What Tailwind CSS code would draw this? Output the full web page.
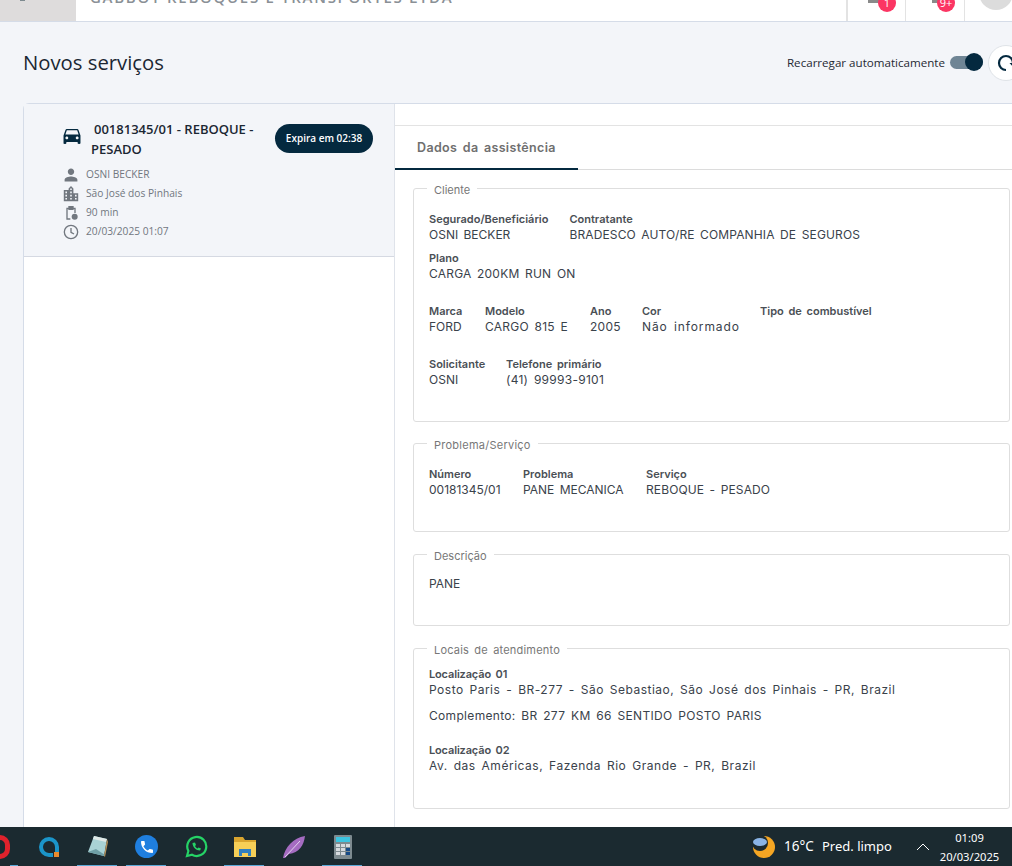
<!DOCTYPE html>
<html lang="pt-BR">
<head>
  <meta charset="UTF-8" />
  <title>Novos serviços</title>
  <script src="https://cdn.jsdelivr.net/npm/@tailwindcss/browser@4"></script>
</head>
<body class="w-[1012px] h-[866px] overflow-hidden bg-[#f3f5f9] font-['Open_Sans',sans-serif] text-[#1f2933] flex flex-col">

  <!-- barra superior -->
  <header class="h-[22px] shrink-0 bg-white border-b border-[#d5dce8] flex overflow-hidden">
    <div class="w-[76px] h-[21px] bg-[#dedcdc] relative">
      <div class="absolute left-[20px] top-0 w-[5px] h-[1px] bg-[#7d8a8f]"></div>
    </div>
    <div class="ml-[14px] -mt-[14px] h-5 text-[15px] font-semibold tracking-[1.700px] text-[#8a9096] whitespace-nowrap">GABBOY REBOQUES E TRANSPORTES LTDA</div>
    <div class="ml-auto flex h-[21px]">
      <div class="w-[59px] border-l-2 border-[#e3e3e3] relative">
        <div class="absolute left-[20px] top-0 w-3 h-[3px] bg-[#8a8a8a]"></div>
        <div class="absolute left-[30px] -top-[6px] w-[18px] h-[18px] rounded-full bg-[#fb3563] text-white text-[11px] text-center leading-[18px]">1</div>
      </div>
      <div class="w-[59px] border-l border-[#e3e3e3] relative">
        <div class="absolute left-[26px] top-0 w-2 h-[3px] bg-[#8a8a8a]"></div>
        <div class="absolute left-[31px] -top-[6px] w-[18px] h-[18px] rounded-full bg-[#fb3563] text-white text-[11px] text-center leading-[18px]">9+</div>
      </div>
      <div class="w-[48px] border-l border-[#e3e3e3] relative">
        <div class="absolute left-[14px] -top-[24px] w-[34px] h-[34px] rounded-full bg-[#dcdcdc]"></div>
      </div>
    </div>
  </header>

  <main class="flex-1 min-h-0 pl-[23px] overflow-hidden">
    <div class="h-[81px] flex items-center justify-between">
      <h1 class="text-[20.300px] text-[#1b2733]">Novos serviços</h1>
      <div class="flex items-center -mr-[12px]">
        <span class="text-[11.600px] mr-[5px]">Recarregar automaticamente</span>
        <div class="relative w-[33px] h-[13px] rounded-full bg-[#6f8595] mr-[5px]">
          <div class="absolute right-0 -top-[3px] w-[18px] h-[18px] rounded-full bg-[#04293f]"></div>
        </div>
        <div class="w-[36px] h-[36px] rounded-full bg-white border border-[#dfe3e8] flex items-center justify-center">
          <svg width="18" height="18" viewBox="0 0 18 18" fill="none" stroke="#04293f" stroke-width="2.200"><path d="M9 16A7 7 0 1 1 16 9"/><path d="M12.500 9h7l-3.500 4z" fill="#04293f" stroke="none"/></svg>
        </div>
      </div>
    </div>

    <div class="flex h-[724px] bg-white border-t border-l border-[#d5dce8] rounded-tl-md">
      <!-- lista -->
      <aside class="w-[371px] shrink-0 border-r border-[#dfe3ea]">
        <div class="h-[153px] bg-[#f3f5f9] border-b border-[#d5d9e2] pl-[39px] pr-[21px] pt-[15px]">
          <div class="flex justify-between items-start">
            <div class="flex items-start">
              <svg class="mt-[9px] w-[18px] h-[16px]" viewBox="3 4 18 17" fill="#04293f"><path d="M18.920 6.010C18.720 5.420 18.160 5 17.500 5h-11c-.66 0-1.210.42-1.420 1.010L3 12v8c0 .55.45 1 1 1h1c.55 0 1-.45 1-1v-1h12v1c0 .55.45 1 1 1h1c.55 0 1-.45 1-1v-8l-2.080-5.990zM6.500 16C5.670 16 5 15.330 5 14.500S5.670 13 6.500 13 8 13.670 8 14.500 7.330 16 6.500 16zm11 0c-.83 0-1.500-.67-1.500-1.500s.67-1.500 1.500-1.500 1.500.67 1.500 1.500-.67 1.500-1.500 1.500zM5 11l1.500-4.500h11L19 11H5z"/></svg>
              <div class="ml-[10px] w-[180px] text-[13px] leading-[20px] font-semibold text-[#1b2733]"><span class="pl-[3px]">00181345/01 - REBOQUE -</span><br>PESADO</div>
            </div>
            <div class="mt-[5px] w-[98px] h-[29px] rounded-full bg-[#04293f] text-white text-[10px] font-semibold flex items-center justify-center whitespace-nowrap">Expira em 02:38</div>
          </div>
          <ul class="mt-[6px] text-[10.200px] text-[#71777f]">
            <li class="h-[19px] flex items-center gap-[7px]">
              <svg class="w-[16px] h-[16px]" viewBox="2 2 20 20" fill="#71777f"><path d="M12 12c2.200 0 4-1.800 4-4s-1.800-4-4-4-4 1.800-4 4 1.800 4 4 4zm0 2c-2.700 0-8 1.300-8 4v2h16v-2c0-2.700-5.300-4-8-4z"/></svg>OSNI BECKER</li>
            <li class="h-[19px] flex items-center gap-[7px]">
              <svg class="w-[16px] h-[16px]" viewBox="2 2 20 20" fill="#71777f"><path d="M15 11V5l-3-3-3 3v2H3v14h18V11h-6zm-8 8H5v-2h2v2zm0-4H5v-2h2v2zm0-4H5V9h2v2zm6 8h-2v-2h2v2zm0-4h-2v-2h2v2zm0-4h-2V9h2v2zm0-4h-2V5h2v2zm6 12h-2v-2h2v2zm0-4h-2v-2h2v2z"/></svg>São José dos Pinhais</li>
            <li class="h-[19px] flex items-center gap-[7px]">
              <svg class="w-[16px] h-[16px]" viewBox="0 0 24 24" fill="none" stroke="#71777f" stroke-width="2"><path d="M11 21H6V5h12v7"/><rect x="9" y="2.500" width="6" height="4" fill="#71777f"/><circle cx="17.500" cy="17.500" r="4.500" fill="#71777f" stroke="none"/></svg>90 min</li>
            <li class="h-[19px] flex items-center gap-[7px]">
              <svg class="w-[16px] h-[16px]" viewBox="0 0 24 24" fill="none" stroke="#71777f" stroke-width="2"><circle cx="12" cy="12" r="10"/><path d="M12 6v6.500l4.500 2.500"/></svg>20/03/2025 01:07</li>
          </ul>
        </div>
      </aside>

      <!-- detalhes -->
      <section class="flex-1 min-w-0 font-['Inter',sans-serif] text-[12px] text-[#3a424b] [word-spacing:2px]">
        <div class="h-[22px] border-b border-[#e3e3e3]"></div>
        <div class="h-[44px] border-b border-[#dcdcdc]">
          <div class="w-[183px] h-[44px] border-b-2 border-[#04293f] pl-[22px] pt-[13px] text-[12.500px] font-semibold tracking-[.35px] text-[#6f6f6f]">Dados da assistência</div>
        </div>

        <div class="pl-[18px] pr-[2px]">
          <fieldset class="h-[242px] mt-[10px] border border-[#dedede] rounded-[3px] px-[15px]">
            <legend class="-ml-[2px] px-[7px] text-[11px] text-[#777]"><span class="relative top-[2px]">Cliente</span></legend>
            <div class="flex gap-[21px] mt-[14px]">
              <div><p class="text-[11px] font-semibold leading-[16px] text-[#4a4f55]">Segurado/Beneficiário</p><p class="leading-[16px]">OSNI BECKER</p></div>
              <div><p class="text-[11px] font-semibold leading-[16px] text-[#4a4f55]">Contratante</p><p class="leading-[16px] tracking-[.13px]">BRADESCO AUTO/RE COMPANHIA DE SEGUROS</p></div>
            </div>
            <div class="mt-[7px]"><p class="text-[11px] font-semibold leading-[16px] text-[#4a4f55]">Plano</p><p class="leading-[16px] tracking-[.2px]">CARGA 200KM RUN ON</p></div>
            <div class="flex gap-[21px] mt-[21px]">
              <div class="w-[35px]"><p class="text-[11px] font-semibold leading-[16px] text-[#4a4f55]">Marca</p><p class="leading-[16px]">FORD</p></div>
              <div class="w-[84px]"><p class="text-[11px] font-semibold leading-[16px] text-[#4a4f55]">Modelo</p><p class="leading-[16px] tracking-[.25px]">CARGO 815 E</p></div>
              <div class="w-[31px]"><p class="text-[11px] font-semibold leading-[16px] text-[#4a4f55]">Ano</p><p class="leading-[16px] tracking-[.25px]">2005</p></div>
              <div class="w-[97px]"><p class="text-[11px] font-semibold leading-[16px] text-[#4a4f55]">Cor</p><p class="leading-[16px] tracking-[.9px] whitespace-nowrap">Não informado</p></div>
              <div><p class="text-[11px] font-semibold leading-[16px] text-[#4a4f55]">Tipo de combustível</p></div>
            </div>
            <div class="flex gap-[21px] mt-[21px]">
              <div class="w-[56px]"><p class="text-[11px] font-semibold leading-[16px] text-[#4a4f55]">Solicitante</p><p class="leading-[16px]">OSNI</p></div>
              <div><p class="text-[11px] font-semibold leading-[16px] text-[#4a4f55]">Telefone primário</p><p class="leading-[16px] tracking-[.27px]">(41) 99993-9101</p></div>
            </div>
          </fieldset>

          <fieldset class="h-[97px] mt-[13px] border border-[#dedede] rounded-[3px] px-[15px]">
            <legend class="-ml-[2px] px-[7px] text-[11px] tracking-[.25px] text-[#777]"><span class="relative top-[2px]">Problema/Serviço</span></legend>
            <div class="flex gap-[21px] mt-[15px]">
              <div class="w-[73px]"><p class="text-[11px] font-semibold leading-[15px] text-[#4a4f55]">Número</p><p class="leading-[16px]">00181345/01</p></div>
              <div class="w-[102px]"><p class="text-[11px] font-semibold leading-[15px] text-[#4a4f55]">Problema</p><p class="leading-[16px]">PANE MECANICA</p></div>
              <div><p class="text-[11px] font-semibold leading-[15px] text-[#4a4f55]">Serviço</p><p class="leading-[16px] tracking-[.12px]">REBOQUE - PESADO</p></div>
            </div>
          </fieldset>

          <fieldset class="h-[80px] mt-[14px] border border-[#dedede] rounded-[3px] px-[15px]">
            <legend class="-ml-[2px] px-[7px] text-[11px] text-[#777]"><span class="relative top-[2px]">Descrição</span></legend>
            <p class="mt-[13px] leading-[16px]">PANE</p>
          </fieldset>

          <fieldset class="h-[169px] mt-[14px] border border-[#dedede] rounded-[3px] px-[15px]">
            <legend class="-ml-[2px] px-[7px] text-[11px] tracking-[.2px] text-[#777]"><span class="relative top-[2px]">Locais de atendimento</span></legend>
            <p class="mt-[10px] text-[11px] font-semibold leading-[15px] tracking-[-.15px] text-[#4a4f55]">Localização 01</p>
            <p class="leading-[16px] tracking-[.5px]">Posto Paris - BR-277 - São Sebastiao, São José dos Pinhais - PR, Brazil</p>
            <p class="mt-[10px] leading-[16px] tracking-[.32px]">Complemento: BR 277 KM 66 SENTIDO POSTO PARIS</p>
            <p class="mt-[18px] text-[11px] font-semibold leading-[16px] tracking-[-.15px] text-[#4a4f55]">Localização 02</p>
            <p class="leading-[16px] tracking-[.53px]">Av. das Américas, Fazenda Rio Grande - PR, Brazil</p>
          </fieldset>
        </div>
      </section>
    </div>
  </main>

  <!-- barra de tarefas -->
  <footer class="h-[39px] shrink-0 bg-[#1b2a30] flex items-center text-white font-['Noto_Sans',sans-serif] overflow-hidden">
    <div class="-ml-[25px] flex h-full">
      <div class="w-[49px] h-full relative flex items-center justify-center">
        <div class="w-[20px] h-[24px] rounded-full border-[5px] border-[#e0222c]"></div>
        <div class="absolute left-[35px] bottom-0 w-[8px] h-[1px] bg-[#5aa9d8]"></div>
      </div>
      <div class="w-[49px] h-full flex items-center justify-center">
        <svg width="24" height="24" viewBox="0 0 24 24" fill="none"><path d="M20 21v-9a8 8 0 1 0-8 8h4" stroke="#1b95c9" stroke-width="4"/><rect x="17" y="17" width="5" height="5" fill="#e98a2c"/></svg>
      </div>
      <div class="w-[49px] h-full relative flex items-center justify-center">
        <svg width="24" height="24" viewBox="0 0 24 24"><path d="M8 1l13 3-3 17L2 17z" fill="#a9d3d6"/><path d="M8 1l13 3-1 3L7 4z" fill="#dfe8e6"/><path d="M2 17l16 4 1-1-9-6z" fill="#6f9fa6"/><path d="M21 4l1 3-3 15-1-1z" fill="#b5915a"/></svg>
        <div class="absolute left-[4px] bottom-0 w-[40px] h-[1px] bg-[#5aa9d8]"></div>
      </div>
      <div class="w-[49px] h-full relative flex items-center justify-center">
        <div class="w-[23px] h-[23px] rounded-full bg-[#1f7fdf] flex items-center justify-center">
          <svg width="16" height="16" viewBox="0 0 24 24" fill="white"><path d="M6.600 10.800c1.400 2.800 3.800 5.100 6.600 6.600l2.200-2.200c.3-.3.700-.4 1-.2 1.100.4 2.300.6 3.600.6.600 0 1 .4 1 1V20c0 .6-.4 1-1 1C10.600 21 3 13.400 3 4c0-.6.4-1 1-1h3.500c.6 0 1 .4 1 1 0 1.300.2 2.500.6 3.600.1.300 0 .7-.2 1l-2.300 2.200z"/></svg>
        </div>
        <div class="absolute left-[4px] bottom-0 w-[40px] h-[1px] bg-[#5aa9d8]"></div>
      </div>
      <div class="w-[49px] h-full flex items-center justify-center">
        <svg width="24" height="24" viewBox="0 0 24 24" fill="none" stroke="#25d366" stroke-width="2.200"><path d="M3 21l1.400-5A9.500 9.500 0 1 1 8 19.700L3 21z"/><path d="M8.500 8c0 4 3.500 7.500 7.500 7.500l1-2-2.500-1-1 1c-1-.5-2-1.500-2.500-2.500l1-1-1-2.500-2.500.5z" fill="#25d366" stroke="none"/></svg>
      </div>
      <div class="w-[49px] h-full relative flex items-center justify-center">
        <svg width="22" height="20" viewBox="0 0 22 20"><path d="M0 0h9l2 3h11v17H0z" fill="#d9a52f"/><path d="M0 5h22v15H0z" fill="#f6cf57"/><path d="M5 19v-7h12v7h-3v-3H8v3z" fill="#2f7fc0"/></svg>
        <div class="absolute left-[4px] bottom-0 w-[40px] h-[1px] bg-[#5aa9d8]"></div>
      </div>
      <div class="w-[49px] h-full flex items-center justify-center">
        <svg width="24" height="24" viewBox="0 0 24 24"><path d="M1 23C3 12 11 3 23 1c-1 9-6 17-16 18l-4 4z" fill="#a56cc1"/><path d="M3 22L18 6" stroke="#e3d1ef" stroke-width="1"/></svg>
      </div>
      <div class="w-[49px] h-full relative flex items-center justify-center">
        <div class="w-[18px] h-[24px] bg-[#7d8a8f] rounded-[1px] p-[2px]">
          <div class="h-[5px] bg-[#3cc4e0]"></div>
          <div class="mt-[2px] grid grid-cols-3 gap-[1px]">
            <div class="h-[3px] bg-[#d6dade]"></div><div class="h-[3px] bg-[#d6dade]"></div><div class="h-[3px] bg-[#d6dade]"></div>
            <div class="h-[3px] bg-[#d6dade]"></div><div class="h-[3px] bg-[#d6dade]"></div><div class="h-[3px] bg-[#164a86]"></div>
            <div class="h-[3px] bg-[#d6dade]"></div><div class="h-[3px] bg-[#d6dade]"></div><div class="h-[3px] bg-[#164a86]"></div>
          </div>
        </div>
        <div class="absolute left-[4px] bottom-0 w-[40px] h-[1px] bg-[#5aa9d8]"></div>
      </div>
    </div>

    <div class="ml-auto mr-[12px] flex items-center">
      <svg class="mr-[8px]" width="24" height="24" viewBox="0 0 24 24"><circle cx="12" cy="12" r="11" fill="#f5a623"/><circle cx="8" cy="8" r="8" fill="#1b2a30"/><ellipse cx="8" cy="7" rx="7" ry="4" fill="#8ab4e6"/></svg>
      <span class="w-[38px] text-[13.500px] whitespace-nowrap">16°C</span>
      <span class="w-[94px] text-[13px] whitespace-nowrap">Pred. limpo</span>
      <svg class="mr-[9px]" width="14" height="8" viewBox="0 0 14 8" fill="none" stroke="white" stroke-width="1"><path d="M1 7l6-6 6 6"/></svg>
      <div class="w-[61px] text-center text-[11.200px] leading-[19px]"><div>01:09</div><div>20/03/2025</div></div>
    </div>
  </footer>
</body>
</html>
